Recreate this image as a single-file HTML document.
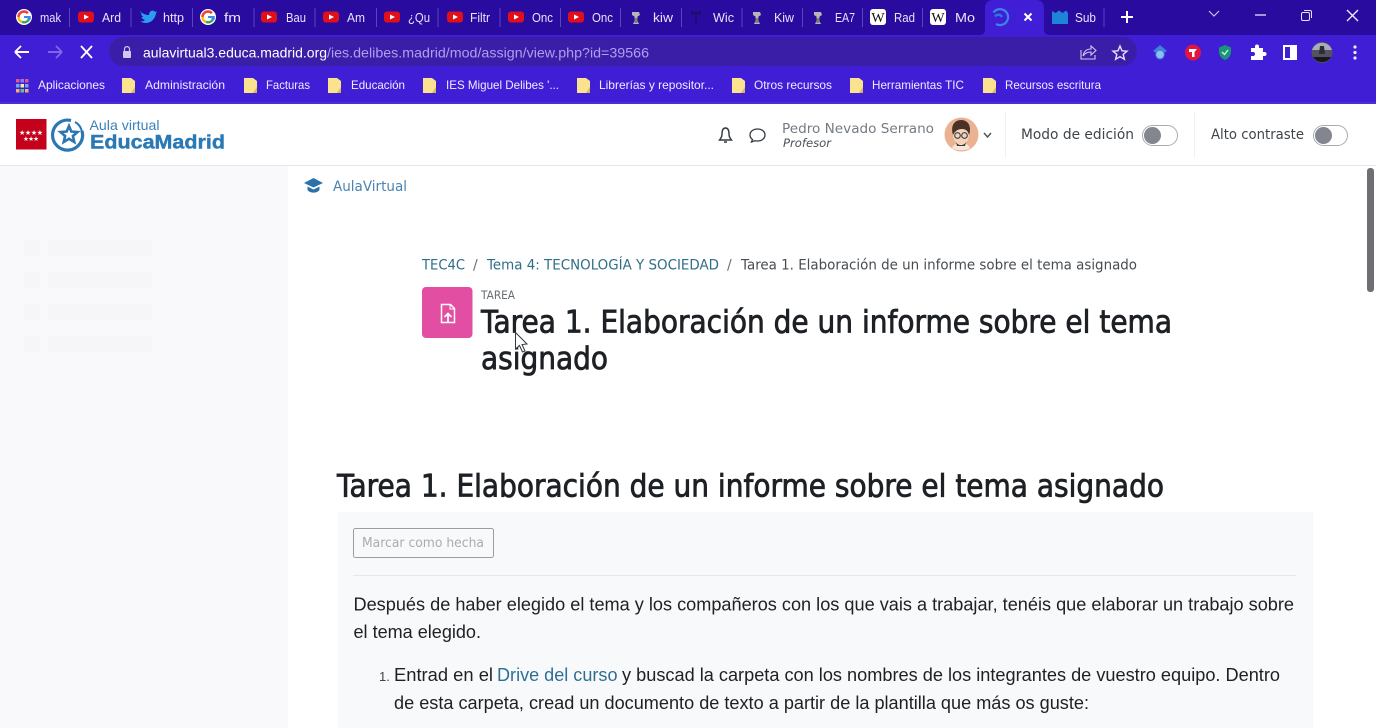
<!DOCTYPE html>
<html lang="es"><head><meta charset="utf-8"><title>Tarea 1</title>
<style>
html,body{margin:0;padding:0;width:1376px;height:728px;overflow:hidden;background:#fff}
svg{display:block}
.t{font-family:"Liberation Sans",sans-serif}
.o{font-family:"DejaVu Sans",sans-serif}
.tab{font-size:13px;fill:#e8e4fa}
.bm{font-size:12px;fill:#f0edff}
.sep{stroke:#5a45c0;stroke-width:1}
</style></head><body>
<svg width="1376" height="728" viewBox="0 0 1376 728" xmlns="http://www.w3.org/2000/svg">
<defs>
<g id="g"><circle r="8" fill="#fff"/><path d="M0-5.500A5.500 5.500 0 0 1 3.900-3.900" stroke="#ea4335" stroke-width="2.400" fill="none"/><path d="M-5.500 0A5.500 5.500 0 0 1 0-5.500" stroke="#ea4335" stroke-width="2.400" fill="none"/><path d="M-5.500 0A5.500 5.500 0 0 0-2 4.900" stroke="#fbbc05" stroke-width="2.400" fill="none"/><path d="M-2 4.900A5.500 5.500 0 0 0 5.400 1" stroke="#34a853" stroke-width="2.400" fill="none"/><path d="M0 0H5.800V1.500H3.500" stroke="#4285f4" stroke-width="2" fill="none"/></g>
<g id="y"><rect x="-8" y="-5.500" width="16" height="11" rx="3" fill="#e0101a"/><path d="M-2-2.500 3 0-2 2.500Z" fill="#fff"/></g>
<g id="k"><path d="M-4-6H3L4-3 1.500-1.500V3L3 6H-3L-1.500 3V-1.500L-4-3Z" fill="#b4b7b6"/><rect x="-1.500" y="0" width="3" height="5" fill="#7a8570"/></g>
<g id="w"><rect x="-8" y="-8" width="16" height="16" rx="3" fill="#fff"/><text x="0" y="5" text-anchor="middle" font-family="Liberation Serif,serif" font-size="14" fill="#111">W</text></g>
<g id="f"><path d="M0 0H9L13 3V15H0Z" fill="#fbe28e"/><path d="M9 15 13 9V15Z" fill="#d4b85c"/></g>
</defs>

<!-- browser chrome -->
<rect width="1376" height="35" fill="#2a0b9f"/>
<rect y="35" width="1376" height="69" fill="#3f1ed6"/>
<rect y="102" width="1376" height="2" fill="#4a2fd4"/>
<path d="M979 35C983 35 985 33 985 30V8C985 3 988 0 993 0H1036C1041 0 1044 3 1044 8V30C1044 33 1046 35 1050 35Z" fill="#3f1ed6"/>

<g class="sep">
<path d="M69.500 8V27M131 8V27M192.500 8V27M254 8V27M315 8V27M376.500 8V27M438 8V27M500 8V27M560.500 8V27M620.500 8V27M681.500 8V27M742 8V27M802.500 8V27M862.500 8V27M922.500 8V27M1104 8V27"/>
</g>
<use href="#g" x="24" y="17"/><use href="#y" x="86" y="17"/>
<path d="M140 11C144 15 147 15 149 15 149 11 153 9 155 12L157 11 156 13.500C155 19 151 23 146 23 144 23 142 22.500 140.500 21.500 142.500 21.500 144 21 145 20 143 19.500 142 18.500 141.500 17 142 17 143 17 143.500 16.800 142 16 141 15 141 13 141.500 13.300 142 13.500 142.500 13.500 141 12.500 140 12 140 11Z" fill="#2b9df0"/>
<use href="#g" x="208" y="17"/><use href="#y" x="269" y="17"/><use href="#y" x="331" y="17"/><use href="#y" x="392" y="17"/><use href="#y" x="455" y="17"/><use href="#y" x="516" y="17"/><use href="#y" x="576" y="17"/>
<use href="#k" x="636" y="18"/>
<path d="M691 13H701M696 11V23M692 11V15M700 11V15" stroke="#1b0f5e" stroke-width="1.500" fill="none"/>
<use href="#k" x="757" y="18"/><use href="#k" x="818" y="18"/><use href="#w" x="878" y="17"/><use href="#w" x="938" y="17"/>
<path d="M993.500 12.500A8 8 0 1 1 996 24" stroke="#3d86e8" stroke-width="2.200" fill="none"/><path d="M995 16.500A4 4 0 0 1 1002 17" stroke="#2f78d8" stroke-width="2.400" fill="none"/>
<path d="M1024.500 13.500 1031.500 20.500M1031.500 13.500 1024.500 20.500" stroke="#fff" stroke-width="2"/>
<path d="M1052 11 1055.500 13 1059 10.500 1062.500 13 1066 10.500 1068 13V24H1052Z" fill="#1e84d8"/>

<g class="t tab">
<text x="40" y="22" textLength="21" lengthAdjust="spacingAndGlyphs">mak</text>
<text x="102" y="22" textLength="19" lengthAdjust="spacingAndGlyphs">Ard</text>
<text x="163" y="22" textLength="21" lengthAdjust="spacingAndGlyphs">http</text>
<text x="224" y="22" textLength="17" lengthAdjust="spacingAndGlyphs">fm</text>
<text x="286" y="22" textLength="20" lengthAdjust="spacingAndGlyphs">Bau</text>
<text x="347" y="22" textLength="18" lengthAdjust="spacingAndGlyphs">Am</text>
<text x="408" y="22" textLength="22" lengthAdjust="spacingAndGlyphs">¿Qu</text>
<text x="470" y="22" textLength="20" lengthAdjust="spacingAndGlyphs">Filtr</text>
<text x="532" y="22" textLength="21" lengthAdjust="spacingAndGlyphs">Onc</text>
<text x="592" y="22" textLength="21" lengthAdjust="spacingAndGlyphs">Onc</text>
<text x="653" y="22" textLength="20" lengthAdjust="spacingAndGlyphs">kiw</text>
<text x="713" y="22" textLength="21" lengthAdjust="spacingAndGlyphs">Wic</text>
<text x="774" y="22" textLength="20" lengthAdjust="spacingAndGlyphs">Kiw</text>
<text x="835" y="22" textLength="20" lengthAdjust="spacingAndGlyphs">EA7</text>
<text x="894" y="22" textLength="21" lengthAdjust="spacingAndGlyphs">Rad</text>
<text x="955" y="22" textLength="20" lengthAdjust="spacingAndGlyphs">Mo</text>
<text x="1075" y="22" textLength="21" lengthAdjust="spacingAndGlyphs">Sub</text>
</g>
<path d="M1127 11V23M1121 17H1133" stroke="#fff" stroke-width="2"/>
<path d="M1209 11 1214 16 1219 11" stroke="#c9c2ee" fill="none" stroke-width="1.200"/>
<path d="M1255 15H1266" stroke="#e6e2fa" stroke-width="1.300"/>
<rect x="1301.500" y="12.500" width="8" height="8" rx="1.500" stroke="#e6e2fa" fill="#2a0b9f"/><path d="M1304 10.500H1310C1311 10.500 1311.500 11 1311.500 12V18" stroke="#e6e2fa" fill="none"/>
<path d="M1347 10 1358 21M1358 10 1347 21" stroke="#f2f0ff" stroke-width="1.300"/>

<!-- toolbar -->
<path d="M15 52H29M15 52 21 46M15 52 21 58" stroke="#fff" stroke-width="1.900" fill="none"/>
<path d="M62 52H48M62 52 56 46M62 52 56 58" stroke="#7e66e4" stroke-width="1.900" fill="none"/>
<path d="M81 46 92 58M92 46 81 58" stroke="#fff" stroke-width="1.900"/>
<rect x="109" y="37" width="1028" height="29" rx="14.500" fill="#3a1ea8"/>
<rect x="123" y="51" width="8" height="7" rx="1" fill="#cfc8ef"/><path d="M124.500 51V49C124.500 45.800 129.500 45.800 129.500 49V51" stroke="#cfc8ef" fill="none" stroke-width="1.200"/>
<text class="t" x="143" y="57.500" font-size="14" fill="#fff" textLength="184" lengthAdjust="spacingAndGlyphs">aulavirtual3.educa.madrid.org</text>
<text class="t" x="327" y="57.500" font-size="14" fill="#ae9fee" textLength="322" lengthAdjust="spacingAndGlyphs">/ies.delibes.madrid/mod/assign/view.php?id=39566</text>
<path d="M1081 50V59H1095V55M1083 56C1084 51 1087 49 1091 49V46L1096 50.500 1091 55V52C1088 52 1085 53 1083 56Z" stroke="#cfc8ef" fill="none" stroke-width="1.100"/>
<path d="M1120 46 1122 50.800 1127 51.200 1123.200 54.400 1124.400 59.300 1120 56.700 1115.600 59.300 1116.800 54.400 1113 51.200 1118 50.800Z" stroke="#e6e2fa" fill="none" stroke-width="1.400"/>
<path d="M1160 45 1167 51 1164.500 52.500V55A4.500 4.500 0 0 1 1155.500 55V52.500L1153 51Z" fill="#3f83d8"/><circle cx="1160" cy="54.500" r="3.800" fill="#8bc0f5"/>
<circle cx="1193" cy="52.500" r="8" fill="#e0163f"/><path d="M1189 49H1197L1194.500 52V57H1192V52H1189Z" fill="#fff"/>
<path d="M1225 45 1231 47.500V52C1231 56 1228 59 1225 60 1222 59 1219 56 1219 52V47.500Z" fill="#1a9478"/><path d="M1222 52 1224.500 54.500 1228 50" stroke="#c5f5dd" stroke-width="1.400" fill="none"/>
<path d="M1251 48H1255V46.500A2 2 0 0 1 1259 46.500V48H1263V52H1264.500A2 2 0 0 1 1264.500 56H1263V60H1251V56H1253A2 2 0 0 0 1253 52H1251Z" fill="#fff"/>
<rect x="1284" y="46" width="12" height="13" fill="none" stroke="#fff" stroke-width="2"/><rect x="1290" y="46" width="6" height="13" fill="#fff"/>
<circle cx="1322" cy="52.500" r="10.500" fill="#55525f"/><path d="M1312 50A10.500 10.500 0 0 1 1332 50Z" fill="#a7adba"/><path d="M1313 57A10.500 10.500 0 0 0 1331 57Z" fill="#17161c"/><path d="M1320 46H1324L1325 54H1319Z" fill="#2d2b33"/>
<circle cx="1355" cy="47" r="1.600" fill="#eee"/><circle cx="1355" cy="52.500" r="1.600" fill="#eee"/><circle cx="1355" cy="58" r="1.600" fill="#eee"/>

<!-- bookmarks -->
<g fill="#e0578a"><rect x="16" y="79" width="3.500" height="3.500"/><rect x="20.500" y="79" width="3.500" height="3.500" fill="#8f7ae8"/><rect x="25" y="79" width="3.500" height="3.500"/></g>
<g fill="#6ea6f0"><rect x="16" y="84" width="3.500" height="3.500"/><rect x="20.500" y="84" width="3.500" height="3.500" fill="#f0f0a0"/><rect x="25" y="84" width="3.500" height="3.500"/></g>
<g fill="#f0b070"><rect x="16" y="89" width="3.500" height="3.500"/><rect x="20.500" y="89" width="3.500" height="3.500" fill="#60c090"/><rect x="25" y="89" width="3.500" height="3.500"/></g>
<use href="#f" x="122" y="78"/><use href="#f" x="244" y="78"/><use href="#f" x="328" y="78"/><use href="#f" x="423" y="78"/><use href="#f" x="577" y="78"/><use href="#f" x="732" y="78"/><use href="#f" x="850" y="78"/><use href="#f" x="983" y="78"/>
<g class="t bm">
<text x="38" y="89" textLength="67" lengthAdjust="spacingAndGlyphs">Aplicaciones</text><text x="145" y="89" textLength="80" lengthAdjust="spacingAndGlyphs">Administración</text><text x="266" y="89" textLength="44" lengthAdjust="spacingAndGlyphs">Facturas</text><text x="351" y="89" textLength="54" lengthAdjust="spacingAndGlyphs">Educación</text><text x="446" y="89" textLength="113" lengthAdjust="spacingAndGlyphs">IES Miguel Delibes '...</text><text x="599" y="89" textLength="115" lengthAdjust="spacingAndGlyphs">Librerías y repositor...</text><text x="754" y="89" textLength="78" lengthAdjust="spacingAndGlyphs">Otros recursos</text><text x="872" y="89" textLength="92" lengthAdjust="spacingAndGlyphs">Herramientas TIC</text><text x="1005" y="89" textLength="96" lengthAdjust="spacingAndGlyphs">Recursos escritura</text>
</g>

<!-- site header -->
<rect y="104" width="1376" height="61" fill="#fff"/>
<rect y="165" width="1376" height="1" fill="#e4e5e8"/>
<rect x="16" y="119" width="30.500" height="30.500" fill="#c4001a"/>
<text class="t" x="31" y="135" text-anchor="middle" font-size="7" fill="#fff" textLength="24">★★★★</text>
<text class="t" x="31" y="141" text-anchor="middle" font-size="6.500" fill="#fff" textLength="16">★★★</text>
<path d="M71 120.500A15 15 0 1 0 82 131" stroke="#2b77b2" stroke-width="3.200" fill="none"/>
<path d="M75 122A13 13 0 0 1 82 133" stroke="#2b77b2" stroke-width="2" fill="none"/>
<path d="M69 126 71.300 131.500 77.500 132 72.900 136 74.300 142 69 138.800 63.700 142 65.100 136 60.500 132 66.700 131.500Z" stroke="#2b77b2" stroke-width="2.600" fill="#fff"/>
<text class="t" x="89.500" y="130" font-size="14" fill="#3c81b8" textLength="70" lengthAdjust="spacingAndGlyphs">Aula virtual</text>
<text class="t" x="90" y="148.500" font-size="19.500" font-weight="700" fill="#2a78b4" stroke="#2a78b4" stroke-width=".4" textLength="135" lengthAdjust="spacingAndGlyphs">EducaMadrid</text>

<path d="M719.500 140H731.500C730 138 729 137 729 134 729 130.500 728 128 725.500 128 723 128 722 130.500 722 134 722 137 721 138 719.500 140ZM724 142H727" stroke="#343a40" stroke-width="1.400" fill="none"/>
<path d="M757.500 129C753 129 750 131.700 750 135 750 137 751 138.500 752.500 139.500L751.500 142 755 140.700C755.800 140.900 756.600 141 757.500 141 762 141 765 138.300 765 135 765 131.700 762 129 757.500 129Z" stroke="#343a40" stroke-width="1.300" fill="none"/>
<text class="o" x="782" y="133" font-size="13.500" fill="#747b82" textLength="152" lengthAdjust="spacingAndGlyphs">Pedro Nevado Serrano</text>
<text class="o" x="783" y="147" font-size="11.500" font-style="italic" fill="#4b5157" textLength="48" lengthAdjust="spacingAndGlyphs">Profesor</text>
<ellipse cx="961.500" cy="134.500" rx="17" ry="17" fill="#eab291"/>
<path d="M952 148C954 144 957 143 961 143 965 143 968 144 970 148 967 151 956 151 952 148Z" fill="#f5e6dc"/>
<ellipse cx="961" cy="135" rx="8" ry="9.500" fill="#f3d3bd"/>
<path d="M953 135C950 125 955 120 961 120 968 120 972 126 969 135 968 131 966 129 962 129 958 129 955 131 953 135Z" fill="#4a3228"/>
<circle cx="957.500" cy="135.500" r="2.800" fill="none" stroke="#3a3f3a" stroke-width="1.100"/><circle cx="964.500" cy="135.500" r="2.800" fill="none" stroke="#3a3f3a" stroke-width="1.100"/>
<path d="M956 142C958 146 964 146 966 142L965 146H957Z" fill="#4a3228"/>
<path d="M984 133 987.500 137 991 133" stroke="#555" stroke-width="1.500" fill="none"/>
<path d="M1005.500 112V158M1194.500 112V158" stroke="#f0f0f1"/>
<text class="o" x="1021" y="139" font-size="14" fill="#3e454c" textLength="113" lengthAdjust="spacingAndGlyphs">Modo de edición</text>
<rect x="1142.500" y="125.500" width="35" height="20" rx="10" fill="#fff" stroke="#a8abb0"/><circle cx="1152.500" cy="135.500" r="8.500" fill="#83858f"/>
<text class="o" x="1211" y="139" font-size="14" fill="#3e454c" textLength="93" lengthAdjust="spacingAndGlyphs">Alto contraste</text>
<rect x="1313.500" y="125.500" width="34" height="20" rx="10" fill="#fff" stroke="#a8abb0"/><circle cx="1323.500" cy="135.500" r="8.500" fill="#83858f"/>

<!-- sidebar -->
<rect y="166" width="288" height="562" fill="#f9f9fb"/>
<g fill="#f6f6f8">
<rect x="24" y="240" width="16" height="16"/><rect x="48" y="240" width="104" height="16"/>
<rect x="24" y="272" width="16" height="16"/><rect x="48" y="272" width="104" height="16"/>
<rect x="24" y="304" width="16" height="16"/><rect x="48" y="304" width="104" height="16"/>
<rect x="24" y="336" width="16" height="16"/><rect x="48" y="336" width="104" height="16"/>
</g>

<!-- scrollbar -->
<rect x="1367" y="168" width="7" height="124" rx="3" fill="#6d6f73"/>

<!-- content -->
<path d="M313.500 178 323 183 313.500 187.500 304 183Z" fill="#2b72a8"/><path d="M307.500 186.500V190C310 193.500 317 193.500 319.500 190V186.500L313.500 189.500Z" fill="#2b72a8"/>
<text class="o" x="333" y="191" font-size="14" fill="#4a82b0" textLength="74" lengthAdjust="spacingAndGlyphs">AulaVirtual</text>

<g class="o" font-size="14">
<text x="422" y="269.500" fill="#2f6f86" textLength="43" lengthAdjust="spacingAndGlyphs">TEC4C</text>
<text x="473" y="269.500" fill="#6a7177">/</text>
<text x="487" y="269.500" fill="#2f6f86" textLength="232" lengthAdjust="spacingAndGlyphs">Tema 4: TECNOLOGÍA Y SOCIEDAD</text>
<text x="727" y="269.500" fill="#6a7177">/</text>
<text x="741" y="269.500" fill="#474d53" textLength="396" lengthAdjust="spacingAndGlyphs">Tarea 1. Elaboración de un informe sobre el tema asignado</text>
</g>

<rect x="422" y="287" width="50.500" height="51" rx="4" fill="#e24fa2"/>
<path d="M441.500 304.500H450.500L454.500 308.500V322.500H441.500Z" stroke="#fff" stroke-width="1.500" fill="none"/><path d="M450 304.500V309H454.500" stroke="#fff" fill="none"/><path d="M448 323V314M444.500 317 448 313.500 451.500 317" stroke="#fff" stroke-width="1.700" fill="none"/>
<text class="o" x="481" y="299" font-size="11.500" fill="#686e74" textLength="34" lengthAdjust="spacingAndGlyphs">TAREA</text>
<g class="o" font-size="31" fill="#1d2125" stroke="#1d2125" stroke-width=".8">
<text x="481" y="332.500" textLength="691" lengthAdjust="spacingAndGlyphs">Tarea 1. Elaboración de un informe sobre el tema</text>
<text x="481" y="369" textLength="127" lengthAdjust="spacingAndGlyphs">asignado</text>
<text x="337" y="496.500" textLength="827" lengthAdjust="spacingAndGlyphs">Tarea 1. Elaboración de un informe sobre el tema asignado</text>
</g>

<path d="M515.500 332.500V349L519.500 345.500 522.500 352 525 351 522 344.500 527 344Z" fill="#fff" stroke="#33373b" stroke-width="1"/>

<rect x="338" y="512" width="975" height="216" fill="#f8f9fa"/>
<rect x="353.500" y="528.500" width="140" height="29" rx="2" fill="#f8f9fa" stroke="#9a9da1"/>
<text class="o" x="362" y="547" font-size="13.500" fill="#a9acaf" textLength="122" lengthAdjust="spacingAndGlyphs">Marcar como hecha</text>
<rect x="353" y="575" width="943" height="1" fill="#e6e7e9"/>
<g class="t" font-size="18" fill="#1d2125">
<text x="353.500" y="610.500" textLength="940.500" lengthAdjust="spacingAndGlyphs">Después de haber elegido el tema y los compañeros con los que vais a trabajar, tenéis que elaborar un trabajo sobre</text>
<text x="353.500" y="638" textLength="127.500" lengthAdjust="spacingAndGlyphs">el tema elegido.</text>
<text x="379" y="681" font-size="13" fill="#3f454b">1.</text>
<text x="394" y="681" textLength="99" lengthAdjust="spacingAndGlyphs">Entrad en el</text>
<text x="497" y="681" fill="#2f6f96" textLength="120.500" lengthAdjust="spacingAndGlyphs">Drive del curso</text>
<text x="622" y="681" textLength="658" lengthAdjust="spacingAndGlyphs">y buscad la carpeta con los nombres de los integrantes de vuestro equipo. Dentro</text>
<text x="394" y="709" textLength="695" lengthAdjust="spacingAndGlyphs">de esta carpeta, cread un documento de texto a partir de la plantilla que más os guste:</text>
</g>
</svg>
</body></html>
